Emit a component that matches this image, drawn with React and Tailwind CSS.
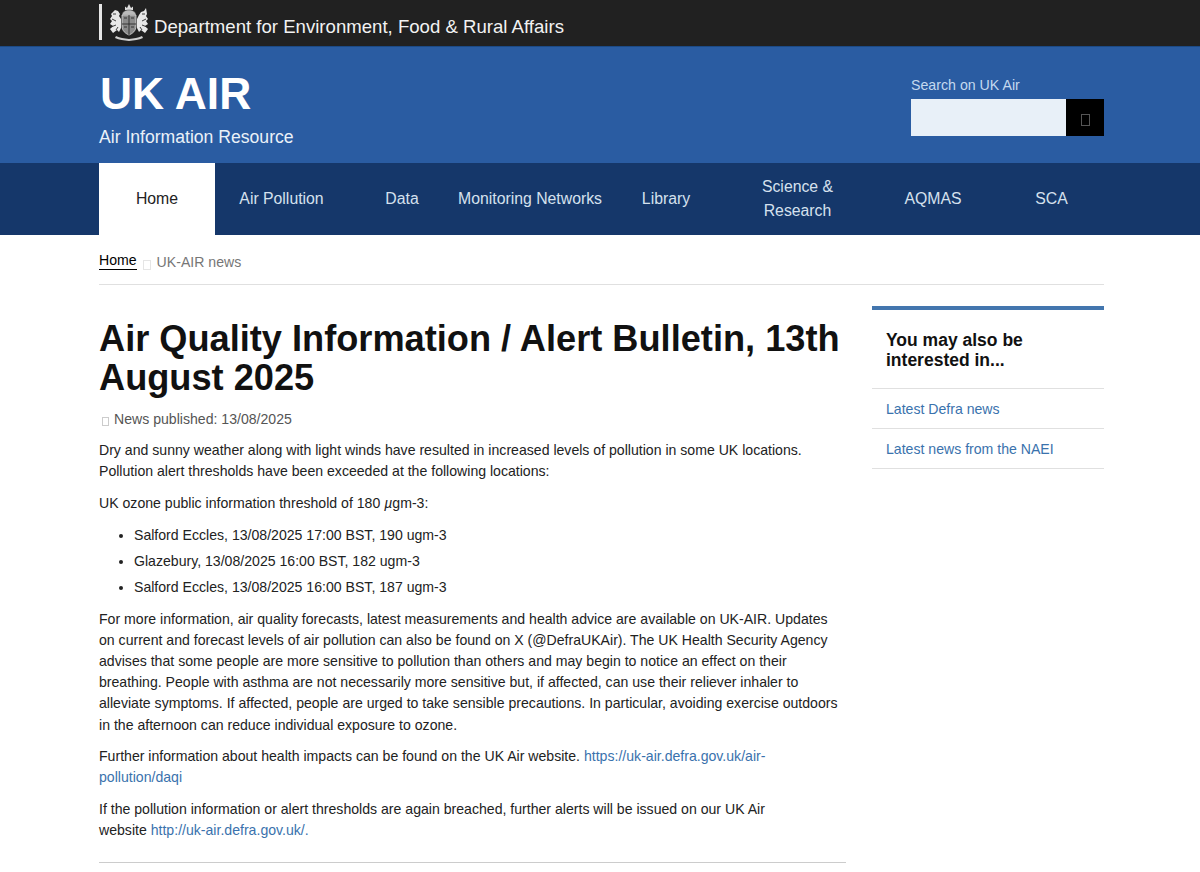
const navItems = [
  { label: "Air Pollution", w: "w-[133px]" },
  { label: "Data", w: "w-[108px]" },
  { label: "Monitoring Networks", w: "w-[148px]" },
  { label: "Library", w: "w-[124px]" },
  { label: "Science & Research", w: "w-[139px]" },
  { label: "AQMAS", w: "w-[132px]" },
  { label: "SCA", w: "w-[105px]" },
];

const Crest = () => (
  <svg viewBox="0 0 42 38" className="w-[42px] h-[38px]" fill="none">
    {/* crown */}
    <path d="M17 7V3.500l2 1.500L21 1l2 4 2-1.500V7z" fill="#ddd" />
    <path d="M14 12c0-3 3-5 7-5s7 2 7 5z" fill="#bbb" stroke="#333" strokeWidth=".5" />
    {/* shield */}
    <path d="M14 12h14v11c0 5-3.500 7.500-7 9-3.500-1.500-7-4-7-9z" fill="#8a8a8a" stroke="#ddd" strokeWidth=".8" />
    <path d="M21 12v20M14 21h14M16 15h3M23 15h3M16 24h3M23 24h3" stroke="#2a2a2a" strokeWidth=".9" />
    {/* lion */}
    <path d="M7 7l3 1 2 3-1 2 2 3v9l-2 4-2-2-4 3-3-4 3-3-3-2 2-3-2-2 2-3-1-2 2-2z" fill="#e8e8e8" />
    <path d="M5 11h3M4 16l4 2M3 24l5-2M8 27l2-3" stroke="#2a2a2a" strokeWidth=".9" />
    {/* unicorn */}
    <path d="M38 5l-2 3-3 1-2 3-1 2-1 2v9l2 4 2-2 4 3 3-4-3-3 3-2-2-3 2-2-2-3 1-2z" fill="#e8e8e8" />
    <path d="M37 11h-3M38 16l-4 2M39 24l-5-2M34 27l-2-3" stroke="#2a2a2a" strokeWidth=".9" />
    {/* motto scroll */}
    <path d="M8 33c4 2 8 2 13 3 5-1 9-1 13-3l1 2c-4 2-9 2-14 3-5-1-10-1-14-3z" fill="#cfcfcf" />
  </svg>
);

const Tofu = ({ className }) => <span className={`inline-block border ${className}`}></span>;

const App = () => {
  return (
    <div className="font-['Liberation_Sans',Arial,sans-serif] bg-white text-[#0b0c0c] h-[872px] overflow-hidden">
      <div className="bg-[#212121] h-[47px] border-b border-[#1c4a85]">
        <div className="w-[1005px] ml-[99px] h-full flex items-center">
          <div className="w-[3px] h-[36px] bg-[#e6e6e6] mb-[3px]"></div>
          <div className="ml-[6px] mb-[3px]">
            <Crest />
          </div>
          <span className="ml-[4px] mt-[8px] text-[18.6px] text-[#f2f2f2] leading-none">
            Department for Environment, Food &amp; Rural Affairs
          </span>
        </div>
      </div>

      <div className="bg-[#2a5ca2] h-[116px]">
        <div className="w-[1005px] ml-[99px] h-full flex justify-between">
          <div>
            <div className="mt-[20px] ml-[1px] text-[44.4px] leading-[54px] font-bold text-white">UK AIR</div>
            <div className="mt-[5px] text-[17.6px] leading-[22px] text-[#eaf1f8]">Air Information Resource</div>
          </div>
          <div className="w-[193px] pt-[29px]">
            <div className="text-[14.2px] leading-[18px] text-[#c4d9ef]">Search on UK Air</div>
            <div className="mt-[5px] flex h-[37px]">
              <div className="w-[155px] bg-[#e8f0f8]"></div>
              <div className="flex-1 bg-black flex items-center justify-center pt-[4px]">
                <Tofu className="w-[9px] h-[12px] border-[#555]" />
              </div>
            </div>
          </div>
        </div>
      </div>

      <div className="bg-[#15376a] h-[72px]">
        <div className="w-[1005px] ml-[99px] h-full flex">
          <div className="w-[116px] bg-white text-[#222] flex items-center justify-center text-[15.8px]">Home</div>
          {navItems.map((item) => (
            <div
              key={item.label}
              className={`${item.w} px-[1px] flex items-center justify-center text-center text-[15.8px] leading-[24px] text-[#d5e1ee]`}
            >
              {item.label}
            </div>
          ))}
        </div>
      </div>

      <div className="w-[1005px] ml-[99px]">
        <div className="h-[50px] border-b border-[#e0e0e0] flex items-start text-[14.1px]">
          <span className="mt-[17px] leading-[17px] border-b border-black text-black">Home</span>
          <Tofu className="w-[8px] h-[10px] border-[#e5e5e5] mt-[25px] ml-[6px]" />
          <span className="mt-[19px] ml-[6px] leading-[17px] text-[#767676]">UK-AIR news</span>
        </div>

        <div className="flex justify-between">
          <div className="w-[747px]">
            <h1 className="mt-[34px] text-[36.2px] leading-[39px] font-bold text-[#111]">
              Air Quality Information / Alert Bulletin, 13th August 2025
            </h1>
            <div className="mt-[12px] flex items-center text-[14.1px] leading-[21px] text-[#555]">
              <Tofu className="w-[7px] h-[9px] border-[#ccc] mt-[3px] ml-[3px] mr-[5px]" />
              News published: 13/08/2025
            </div>
            <div className="text-[14.1px] leading-[21.15px] text-[#222]">
              <p className="mt-[10px]">
                Dry and sunny weather along with light winds have resulted in increased levels of pollution in some UK locations. Pollution alert thresholds have been exceeded at the following locations:
              </p>
              <p className="mt-[10.6px]">
                UK ozone public information threshold of 180 <i>µ</i>gm-3:
              </p>
              <ul className="mt-[10.6px] list-disc pl-[35px] space-y-[5px]">
                <li>Salford Eccles, 13/08/2025 17:00 BST, 190 ugm-3</li>
                <li>Glazebury, 13/08/2025 16:00 BST, 182 ugm-3</li>
                <li>Salford Eccles, 13/08/2025 16:00 BST, 187 ugm-3</li>
              </ul>
              <p className="mt-[10.6px]">
                For more information, air quality forecasts, latest measurements and health advice are available on UK-AIR. Updates on current and forecast levels of air pollution can also be found on X (@DefraUKAir). The UK Health Security Agency advises that some people are more sensitive to pollution than others and may begin to notice an effect on their breathing. People with asthma are not necessarily more sensitive but, if affected, can use their reliever inhaler to alleviate symptoms. If affected, people are urged to take sensible precautions. In particular, avoiding exercise outdoors in the afternoon can reduce individual exposure to ozone.
              </p>
              <p className="mt-[10.6px]">
                Further information about health impacts can be found on the UK Air website.{" "}
                <a className="text-[#3a72ad]">https://uk-air.defra.gov.uk/air-pollution/daqi</a>
              </p>
              <p className="mt-[10.6px] w-[700px]">
                If the pollution information or alert thresholds are again breached, further alerts will be issued on our UK Air website <a className="text-[#3a72ad]">http://uk-air.defra.gov.uk/.</a>
              </p>
            </div>
            <div className="mt-[21px] border-t border-[#ccc]"></div>
          </div>

          <div className="w-[232px] mt-[21px]">
            <div className="h-[4px] bg-[#4376ae]"></div>
            <div className="px-[14px] pt-[20px] pb-[18px] text-[17.5px] leading-[20px] font-bold text-[#111] border-b border-[#e0e0e0]">
              You may also be interested in...
            </div>
            <div className="px-[14px] pt-[2px] h-[40px] flex items-center text-[14.1px] text-[#3a72ad] border-b border-[#e0e0e0]">Latest Defra news</div>
            <div className="px-[14px] pt-[2px] h-[40px] flex items-center text-[14.1px] text-[#3a72ad] border-b border-[#e0e0e0]">Latest news from the NAEI</div>
          </div>
        </div>
      </div>
    </div>
  );
};

export default App;
